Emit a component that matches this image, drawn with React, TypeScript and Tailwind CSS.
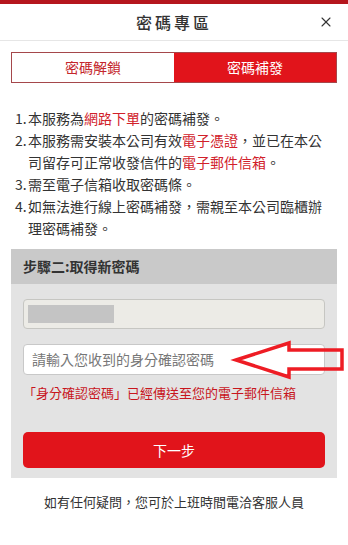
import { X } from "lucide-react";

const font = { fontFamily: '"Noto Sans CJK TC", "Noto Sans", sans-serif' };

function Item({ n, children }: { n: number; children: React.ReactNode }) {
  return (
    <li className="flex">
      <span className="w-[13px] shrink-0">{n}.</span>
      <span className="min-w-0 flex-1">{children}</span>
    </li>
  );
}

export default function App() {
  return (
    <div className="relative w-[348px] h-[545px] overflow-hidden bg-white text-[#333]" style={font}>
      <div className="h-[4px] bg-[#b5161d]" />
      <header className="relative flex h-[37px] items-center justify-center border-b border-[#e6e6e6]">
        <h1 className="text-[16px] font-medium tracking-[3px] text-[#333]">密碼專區</h1>
        <button type="button" className="absolute right-[14px] top-[10px] text-[#333]">
          <X size={16} strokeWidth={1.6} />
        </button>
      </header>

      <div className="mx-[11px] mt-[11px] flex h-[31px] border border-[#a5474b]">
        <button type="button" className="flex-1 bg-white text-[14px] text-[#c4262c]">
          密碼解鎖
        </button>
        <button type="button" className="flex-1 bg-[#e1141b] text-[14px] text-white">
          密碼補發
        </button>
      </div>

      <ol className="mt-[24px] pl-[15px] pr-[20px] text-[14px] leading-[22px]">
        <Item n={1}>
          本服務為<span className="text-[#d1202a]">網路下單</span>的密碼補發。
        </Item>
        <Item n={2}>
          本服務需安裝本公司有效<span className="text-[#d1202a]">電子憑證</span>，並已在本公司留存可正常收發信件的
          <span className="text-[#d1202a]">電子郵件信箱</span>。
        </Item>
        <Item n={3}>需至電子信箱收取密碼條。</Item>
        <Item n={4}>如無法進行線上密碼補發，需親至本公司臨櫃辦理密碼補發。</Item>
      </ol>

      <section className="mx-[11px] mt-[10px] bg-[#e3e3e3]">
        <div className="flex h-[35px] items-center bg-[#c9c9c9] px-[12px] text-[14px] font-bold text-[#333]">
          步驟二:取得新密碼
        </div>
        <div className="px-[12px] pb-[10px] pt-[15px]">
          <div className="flex h-[30px] items-center rounded-[4px] border border-[#c6c6c2] bg-[#ecebe6] px-[4px]">
            <div className="h-[18px] w-[86px] bg-[#c4c4c4]" />
          </div>
          <div className="mt-[15px] flex h-[31px] items-center rounded-[4px] border border-[#c8c8c8] bg-white px-[8px] text-[14px] text-[#777]">
            請輸入您收到的身分確認密碼
          </div>
          <p className="mt-[9px] text-[13px] leading-[18px] text-[#c8161d]">
            「身分確認密碼」已經傳送至您的電子郵件信箱
          </p>
          <button
            type="button"
            className="mt-[30px] h-[36px] w-full rounded-[5px] bg-[#e1141b] text-[14px] text-white"
          >
            下一步
          </button>
        </div>
      </section>

      <p className="mt-[14px] text-center text-[13px] leading-[20px] text-[#333]">
        如有任何疑問，您可於上班時間電洽客服人員
      </p>

      <svg
        className="absolute left-0 top-0"
        width="348"
        height="545"
        viewBox="0 0 348 545"
        fill="none"
      >
        <polygon
          points="236,360 289,343 289,350 342,350 342,369 289,369 289,377"
          stroke="#ee1c24"
          strokeWidth="3.5"
          strokeLinejoin="miter"
        />
      </svg>
    </div>
  );
}
